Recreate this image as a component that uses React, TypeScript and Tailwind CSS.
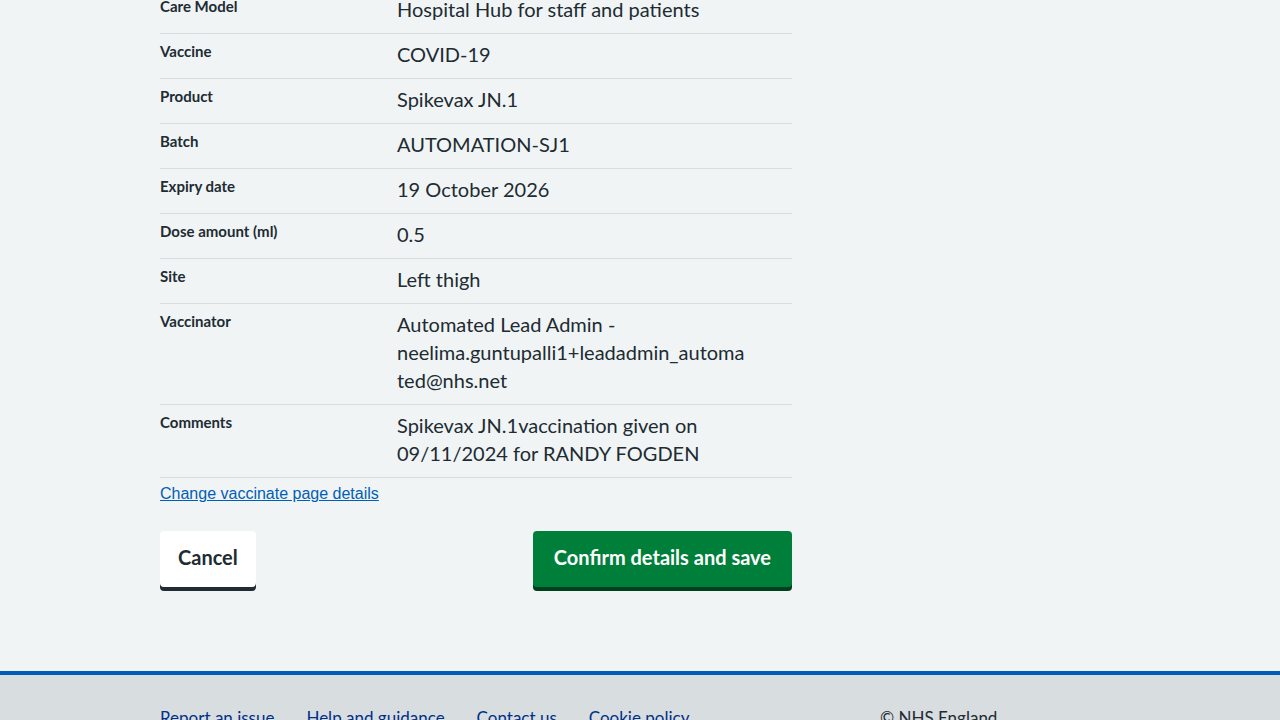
import React from "react";

const rows: { k: string; v: React.ReactNode }[] = [
  { k: "Care Model", v: "Hospital Hub for staff and patients" },
  { k: "Vaccine", v: "COVID-19" },
  { k: "Product", v: "Spikevax JN.1" },
  { k: "Batch", v: "AUTOMATION-SJ1" },
  { k: "Expiry date", v: "19 October 2026" },
  { k: "Dose amount (ml)", v: "0.5" },
  { k: "Site", v: "Left thigh" },
  {
    k: "Vaccinator",
    v: (
      <>
        <span className="block">Automated Lead Admin -</span>
        <span className="block">neelima.guntupalli1+leadadmin_automa</span>
        <span className="block">ted@nhs.net</span>
      </>
    ),
  },
  {
    k: "Comments",
    v: (
      <>
        <span className="block">Spikevax JN.1vaccination given on</span>
        <span className="block">09/11/2024 for RANDY FOGDEN</span>
      </>
    ),
  },
];

export default function App() {
  return (
    <div
      className="min-h-[720px] bg-[#f0f4f5] text-[#212b32] flex flex-col"
      style={{ fontFamily: "Lato, 'Noto Sans', sans-serif" }}
    >
      <main className="flex-1 pl-[160px] h-[671px] overflow-hidden">
        <div className="w-[632px] -mt-[11px]">
          <dl>
            {rows.map((r) => (
              <div key={r.k} className="flex border-b border-[#d8dde0] pt-[6px] pb-[10px]">
                <dt className="w-[237px] shrink-0 font-bold text-[15px] leading-[19px] pt-[2px]">{r.k}</dt>
                <dd className="flex-1 text-[20px] leading-[28px]">{r.v}</dd>
              </div>
            ))}
          </dl>
          <div className="mt-[3px]">
            <a
              href="#"
              className="text-[#005eb8] underline text-[16px] leading-[18px]"
              style={{ fontFamily: "'Liberation Sans', Arial, sans-serif" }}
            >
              Change vaccinate page details
            </a>
          </div>
          <div className="flex justify-between mt-[26px]">
            <button className="bg-white rounded-[4px] shadow-[0_4px_0_#212b32] h-[56px] px-[18px] pb-[4px] text-[20px] leading-[24px] font-bold text-[#212b32]">
              Cancel
            </button>
            <button className="bg-[#007f3b] rounded-[4px] shadow-[0_4px_0_#00401e] h-[56px] px-[21px] pb-[4px] text-[20px] leading-[24px] font-bold text-white">
              Confirm details and save
            </button>
          </div>
        </div>
      </main>
      <footer className="border-t-4 border-[#005eb8] bg-[#d8dde0] h-[49px] overflow-hidden">
        <div className="pl-[160px] pt-[31px] flex text-[17px] leading-[24px]">
          <div className="w-[720px] flex gap-[32px] text-[#003087]">
            <a href="#">Report an issue</a>
            <a href="#">Help and guidance</a>
            <a href="#">Contact us</a>
            <a href="#">Cookie policy</a>
          </div>
          <div className="text-[#212b32]">© NHS England</div>
        </div>
      </footer>
    </div>
  );
}
